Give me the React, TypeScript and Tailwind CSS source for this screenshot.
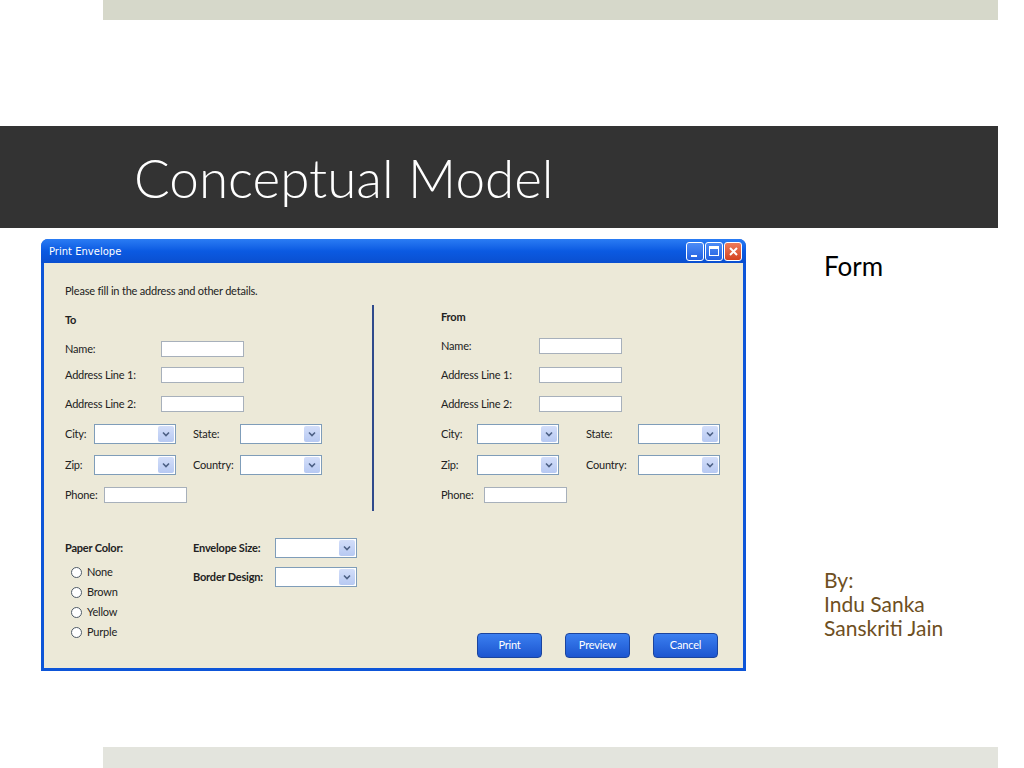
import React from 'react';

const formFont = { fontFamily: 'Lato, "Open Sans", sans-serif', letterSpacing: '-0.2px' };

function TextBox({ w = 'w-[83px]' }: { w?: string }) {
  return <div className={`${w} h-[16px] bg-white border border-[#a7b0bb] shrink-0`} />;
}

function Select() {
  return (
    <div className="w-[82px] h-[20px] bg-white border border-[#7f9db9] flex justify-end items-stretch p-[1px] shrink-0">
      <div className="w-[16px] rounded-[2px] bg-gradient-to-b from-[#d3def9] to-[#b7c9f2] flex items-center justify-center">
        <svg width="8" height="6" viewBox="0 0 8 6">
          <path d="M1 1.5 L4 4.5 L7 1.5" stroke="#4d6185" strokeWidth="1.6" fill="none" />
        </svg>
      </div>
    </div>
  );
}

function Row({ label, lw, children, mt }: { label: string; lw: string; children: React.ReactNode; mt: string }) {
  return (
    <div className={`flex items-center ${mt}`}>
      <span className={`${lw} shrink-0 text-[11px] leading-[14px] text-[#222]`}>{label}</span>
      {children}
    </div>
  );
}

function Radio({ label }: { label: string }) {
  return (
    <div className="flex items-center h-[20px] pl-[6px]">
      <span className="w-[11px] h-[11px] rounded-full border border-[#4f5b66] bg-white" />
      <span className="ml-[5px] text-[11px] leading-[14px] text-[#222]">{label}</span>
    </div>
  );
}

function XpButton({ label }: { label: string }) {
  return (
    <button className="w-[65px] h-[25px] rounded-[4px] border border-[#1b449e] bg-gradient-to-b from-[#3b7ff0] to-[#1d55d0] text-white text-[11px]">
      {label}
    </button>
  );
}

function Window() {
  return (
    <div className="w-[705px] h-[432px] rounded-t-[7px] bg-[#0d55d8] flex flex-col shrink-0" style={formFont}>
      <div className="h-[24px] flex items-center pl-[8px] pr-[4px] rounded-t-[7px] bg-gradient-to-b from-[#2a7cf4] via-[#0b5ae2] to-[#0a4fd0]">
        <span className="text-white" style={{ fontFamily: '"DejaVu Sans", sans-serif', fontSize: '10px', letterSpacing: '0' }}>
          Print Envelope
        </span>
        <div className="ml-auto flex gap-[1px]">
          <div className="w-[18px] h-[19px] rounded-[3px] border border-white bg-gradient-to-b from-[#4d8cf6] to-[#2360e0] flex items-end pl-[4px] pb-[3px]">
            <div className="w-[6px] h-[2px] bg-white" />
          </div>
          <div className="w-[18px] h-[19px] rounded-[3px] border border-white bg-gradient-to-b from-[#4d8cf6] to-[#2360e0] flex items-center justify-center">
            <div className="w-[10px] h-[10px] border border-white border-t-[3px]" />
          </div>
          <div className="w-[18px] h-[19px] rounded-[3px] border border-white bg-gradient-to-b from-[#ec7a5a] to-[#d4431f] flex items-center justify-center">
            <svg width="9" height="9" viewBox="0 0 9 9">
              <path d="M1 1 L8 8 M8 1 L1 8" stroke="white" strokeWidth="2" />
            </svg>
          </div>
        </div>
      </div>

      <div className="flex-1 mx-[3px] mb-[3px] bg-[#ece9d8] pl-[21px] pr-[25px] pt-[21px] flex flex-col">
        {/* top part */}
        <div className="flex">
          <div className="w-[307px] shrink-0 flex flex-col">
            <p className="text-[11px] leading-[14px] text-[#222]">Please fill in the address and other details.</p>
            <p className="mt-[15px] text-[11px] leading-[14px] font-bold text-[#222]">To</p>
            <Row label="Name:" lw="w-[96px]" mt="mt-[14px]"><TextBox /></Row>
            <Row label="Address Line 1:" lw="w-[96px]" mt="mt-[10px]"><TextBox /></Row>
            <Row label="Address Line 2:" lw="w-[96px]" mt="mt-[13px]"><TextBox /></Row>
            <div className="flex items-center mt-[12px]">
              <span className="w-[29px] shrink-0 text-[11px] text-[#222]">City:</span>
              <Select />
              <span className="ml-[17px] w-[47px] shrink-0 text-[11px] text-[#222]">State:</span>
              <Select />
            </div>
            <div className="flex items-center mt-[11px]">
              <span className="w-[29px] shrink-0 text-[11px] text-[#222]">Zip:</span>
              <Select />
              <span className="ml-[17px] w-[47px] shrink-0 text-[11px] text-[#222]">Country:</span>
              <Select />
            </div>
            <Row label="Phone:" lw="w-[39px]" mt="mt-[12px]"><TextBox /></Row>
          </div>

          <div className="w-[2px] h-[206px] mt-[21px] bg-[#2f4a8c] shrink-0" />

          <div className="ml-[67px] shrink-0 flex flex-col">
            <p className="mt-[26px] text-[11px] leading-[14px] font-bold text-[#222]">From</p>
            <Row label="Name:" lw="w-[98px]" mt="mt-[14px]"><TextBox /></Row>
            <Row label="Address Line 1:" lw="w-[98px]" mt="mt-[13px]"><TextBox /></Row>
            <Row label="Address Line 2:" lw="w-[98px]" mt="mt-[13px]"><TextBox /></Row>
            <div className="flex items-center mt-[12px]">
              <span className="w-[36px] shrink-0 text-[11px] text-[#222]">City:</span>
              <Select />
              <span className="ml-[27px] w-[52px] shrink-0 text-[11px] text-[#222]">State:</span>
              <Select />
            </div>
            <div className="flex items-center mt-[11px]">
              <span className="w-[36px] shrink-0 text-[11px] text-[#222]">Zip:</span>
              <Select />
              <span className="ml-[27px] w-[52px] shrink-0 text-[11px] text-[#222]">Country:</span>
              <Select />
            </div>
            <Row label="Phone:" lw="w-[43px]" mt="mt-[12px]"><TextBox /></Row>
          </div>
        </div>

        {/* bottom part */}
        <div className="flex h-[120px] mt-[27px]">
          <div className="w-[128px] flex flex-col">
            <p className="mt-[3px] text-[11px] leading-[14px] font-bold text-[#222]">Paper Color:</p>
            <div className="mt-[7px] flex flex-col">
              <Radio label="None" />
              <Radio label="Brown" />
              <Radio label="Yellow" />
              <Radio label="Purple" />
            </div>
          </div>
          <div className="flex flex-col">
            <div className="flex items-center">
              <span className="w-[82px] shrink-0 text-[11px] font-bold text-[#222]">Envelope Size:</span>
              <Select />
            </div>
            <div className="flex items-center mt-[9px]">
              <span className="w-[82px] shrink-0 text-[11px] font-bold text-[#222]">Border Design:</span>
              <Select />
            </div>
          </div>
          <div className="ml-auto self-end flex gap-[23px]">
            <XpButton label="Print" />
            <XpButton label="Preview" />
            <XpButton label="Cancel" />
          </div>
        </div>
      </div>
    </div>
  );
}

export default function App() {
  return (
    <div className="w-[1024px] h-[768px] bg-white overflow-hidden flex flex-col">
      <div className="ml-[103px] w-[895px] h-[20px] bg-[#d6d8ca] shrink-0" />

      <div className="mt-[106px] w-[998px] h-[102px] bg-[#333333] flex items-center pl-[134px] shrink-0">
        <h1 className="text-white text-[53px] font-light leading-none" style={{ fontFamily: 'Lato, "DejaVu Sans", sans-serif' }}>
          Conceptual Model
        </h1>
      </div>

      <div className="mt-[11px] flex shrink-0">
        <div className="ml-[41px]">
          <Window />
        </div>
        <div className="ml-[78px] flex flex-col" style={{ fontFamily: 'Lato, "DejaVu Sans", sans-serif' }}>
          <p className="mt-[12px] text-[26px] leading-[30px] text-black">Form</p>
          <div className="mt-[287px] text-[21px] leading-[24px] text-[#6e4f22]">
            <p>By:</p>
            <p>Indu Sanka</p>
            <p>Sanskriti Jain</p>
          </div>
        </div>
      </div>

      <div className="mt-[76px] ml-[103px] w-[895px] h-[21px] bg-[#e3e4dd] shrink-0" />
    </div>
  );
}
